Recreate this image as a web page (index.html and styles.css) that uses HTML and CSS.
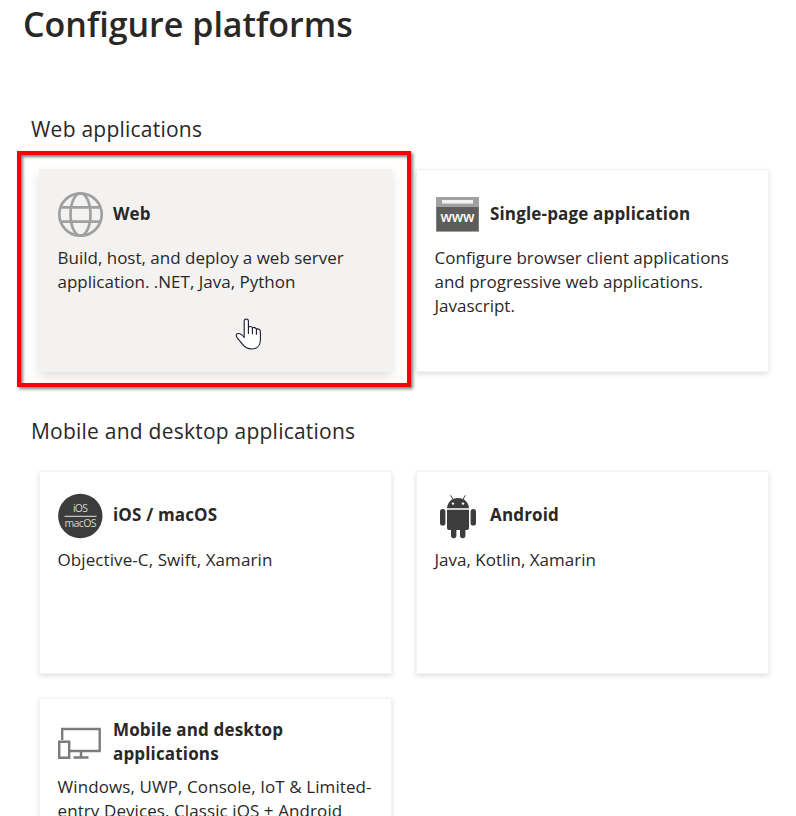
FILE: index.html
```html
<!DOCTYPE html>
<html lang="en">
<head>
<meta charset="utf-8">
<title>Configure platforms</title>
<link rel="stylesheet" href="styles.css">
</head>
<body>
<main class="panel">
  <h1 class="title">Configure platforms</h1>

  <section class="group">
    <h2 class="group-title">Web applications</h2>
    <div class="cards">
      <article class="card card-active">
        <header class="card-head">
          <svg class="icon" viewBox="0 0 46 46" fill="none" stroke="#a0a0a0" stroke-width="2.7">
            <circle cx="22.5" cy="23.500" r="21.2"/>
            <ellipse cx="22.5" cy="23.500" rx="10" ry="21.2"/>
            <path d="M3.500 16.300h38M3.500 30.700h38"/>
          </svg>
          <h3 class="card-title">Web</h3>
        </header>
        <p class="card-text">Build, host, and deploy a web server<br>application. .NET, Java, Python</p>
        <svg class="pointer" viewBox="0 0 28 34" fill="#fff" stroke="#1b1830" stroke-width="1.1" stroke-linejoin="round" stroke-linecap="round">
          <path d="M9.2 20.5V4.2c0-3 4.2-3 4.2 0v6.3c.9-1.600 3.700-1.200 4 .6 1.200-1.100 3.600-.6 4 1.100 1.700-.8 4 .1 4 2.500v8c0 6-3.600 9.300-9 9.300-4.200 0-6.600-1.800-9-4.800L2.200 20.800c-1.900-2.700-.7-4.300 1-4.300 2.500 0 4.400 1.700 6 4z"/>
          <path d="M13.400 10.500v6M17.400 11.200v5.600M21.400 12.300v5"/>
        </svg>
      </article>
      <article class="card">
        <header class="card-head">
          <svg class="icon" viewBox="0 0 46 46">
            <path fill="#a0a1a1" d="M1 6h43v35H1z"/>
            <path fill="#f2f2f2" d="M7 9h31v3.600H7z"/>
            <path fill="#5e5d5c" d="M1.500 16h42v24h-42z"/>
            <text class="www" x="22.500" y="30.500" textLength="34">www</text>
          </svg>
          <h3 class="card-title">Single-page application</h3>
        </header>
        <p class="card-text">Configure browser client applications<br>and progressive web applications.<br>Javascript.</p>
      </article>
    </div>
  </section>

  <section class="group">
    <h2 class="group-title">Mobile and desktop applications</h2>
    <div class="cards cards-raised">
      <article class="card">
        <header class="card-head">
          <svg class="icon" viewBox="0 0 46 46">
            <circle cx="22.300" cy="23" r="22.200" fill="#3c3c3d"/>
            <path d="M6.500 23.300h32" stroke="#c4c4c4" stroke-width="1.200"/>
            <text class="os" x="22.500" y="19" textLength="15">iOS</text>
            <text class="os" x="22.500" y="34" textLength="32">macOS</text>
          </svg>
          <h3 class="card-title">iOS / macOS</h3>
        </header>
        <p class="card-text wide">Objective-C, Swift, Xamarin</p>
      </article>
      <article class="card">
        <header class="card-head">
          <svg class="icon" viewBox="0 0 46 46" fill="#3c3c3d">
            <path d="M12 15.300C12.500 9 17 5 23 5s10.500 4 11 10.300z"/>
            <path d="M18.500 7 15.600 2.300M27.500 7l2.900-4.700" stroke="#3c3c3d" stroke-width="1"/>
            <circle cx="18" cy="10.600" r="1.200" fill="#fff"/><circle cx="28" cy="10.600" r="1.200" fill="#fff"/>
            <path d="M12 16.800h22V35q0 2-2 2H14q-2 0-2-2z"/>
            <rect x="5" y="16" width="5.400" height="16.600" rx="2.700"/>
            <rect x="35.600" y="16" width="5.400" height="16.600" rx="2.700"/>
            <rect x="16" y="32" width="5.400" height="13.300" rx="2.700"/>
            <rect x="25" y="32" width="5.400" height="13.300" rx="2.700"/>
          </svg>
          <h3 class="card-title">Android</h3>
        </header>
        <p class="card-text">Java, Kotlin, Xamarin</p>
      </article>
      <article class="card">
        <header class="card-head">
          <svg class="icon" viewBox="0 0 46 46" fill="none" stroke="#7c7c7c" stroke-width="2.400">
            <path d="M4.200 20V9h37.500v22H12"/>
            <path d="M1.200 21.700h10v16h-10z"/>
            <path d="M23 31v6M15.500 37.500h15"/>
          </svg>
          <h3 class="card-title">Mobile and desktop<br>applications</h3>
        </header>
        <p class="card-text wide">Windows, UWP, Console, IoT &amp; Limited-<br>entry Devices, Classic iOS + Android</p>
      </article>
    </div>
  </section>
</main>
</body>
</html>
```
FILE: styles.css
```css
* { box-sizing: border-box; }

body {
  margin: 0;
  height: 816px;
  overflow: hidden;
  background: #fff;
  color: #292827;
  font-family: "Open Sans", "Noto Sans", sans-serif;
}

h1, h2, h3, p { margin: 0; }

.panel {
  height: 816px;
  overflow: hidden;
  padding-left: 23px;
}

.title {
  height: 110px;
  padding-top: 1px;
  font-size: 34px;
  line-height: 46px;
  font-weight: 600;
}

.group { padding-left: 8px; height: 302px; }

.group-title {
  height: 59px;
  padding-top: 4px;
  font-size: 21px;
  line-height: 30px;
  font-weight: 400;
  letter-spacing: .23px;
}

.cards {
  display: grid;
  grid-template-columns: 353px 353px;
  grid-auto-rows: 203px;
  gap: 24px;
  padding-left: 8px;
}

.card {
  position: relative;
  padding: 19px 0 0 18px;
  background: #fff;
  border: 1px solid #f3f3f3;
  box-shadow: 0 2px 5px rgba(0, 0, 0, .13);
}

.card-active {
  background: #f3f2f1;
  border-color: #f3f2f1;
  box-shadow: 0 4px 10px rgba(0, 0, 0, .13);
}

.card-active::after {
  content: "";
  position: absolute;
  inset: -19px -20px -16px -23px;
  border: 4px solid #f00;
  box-shadow: 2px 2px 3px rgba(0, 0, 0, .5), inset 2px 2px 3px rgba(0, 0, 0, .5);
  z-index: 1;
}

.card-head {
  display: flex;
  align-items: center;
  gap: 9px;
  height: 50px;
}

.icon { width: 46px; height: 46px; flex: none; }

.card-title {
  font-size: 17px;
  line-height: 24px;
  font-weight: 700;
  letter-spacing: .16px;
}

.cards-raised .card-title { margin-top: -2px; }

.card-text {
  margin-left: -.5px;
  padding-top: 7px;
  font-size: 17px;
  line-height: 24px;
}

.wide { letter-spacing: .09px; }

.www {
  fill: #fff;
  font-size: 14px;
  font-weight: 600;
  text-anchor: middle;
}

.os {
  fill: #d4d4d4;
  font-size: 10.5px;
  text-anchor: middle;
}

.pointer {
  position: absolute;
  left: 195px;
  top: 147px;
  width: 28px;
  height: 34px;
}
```
